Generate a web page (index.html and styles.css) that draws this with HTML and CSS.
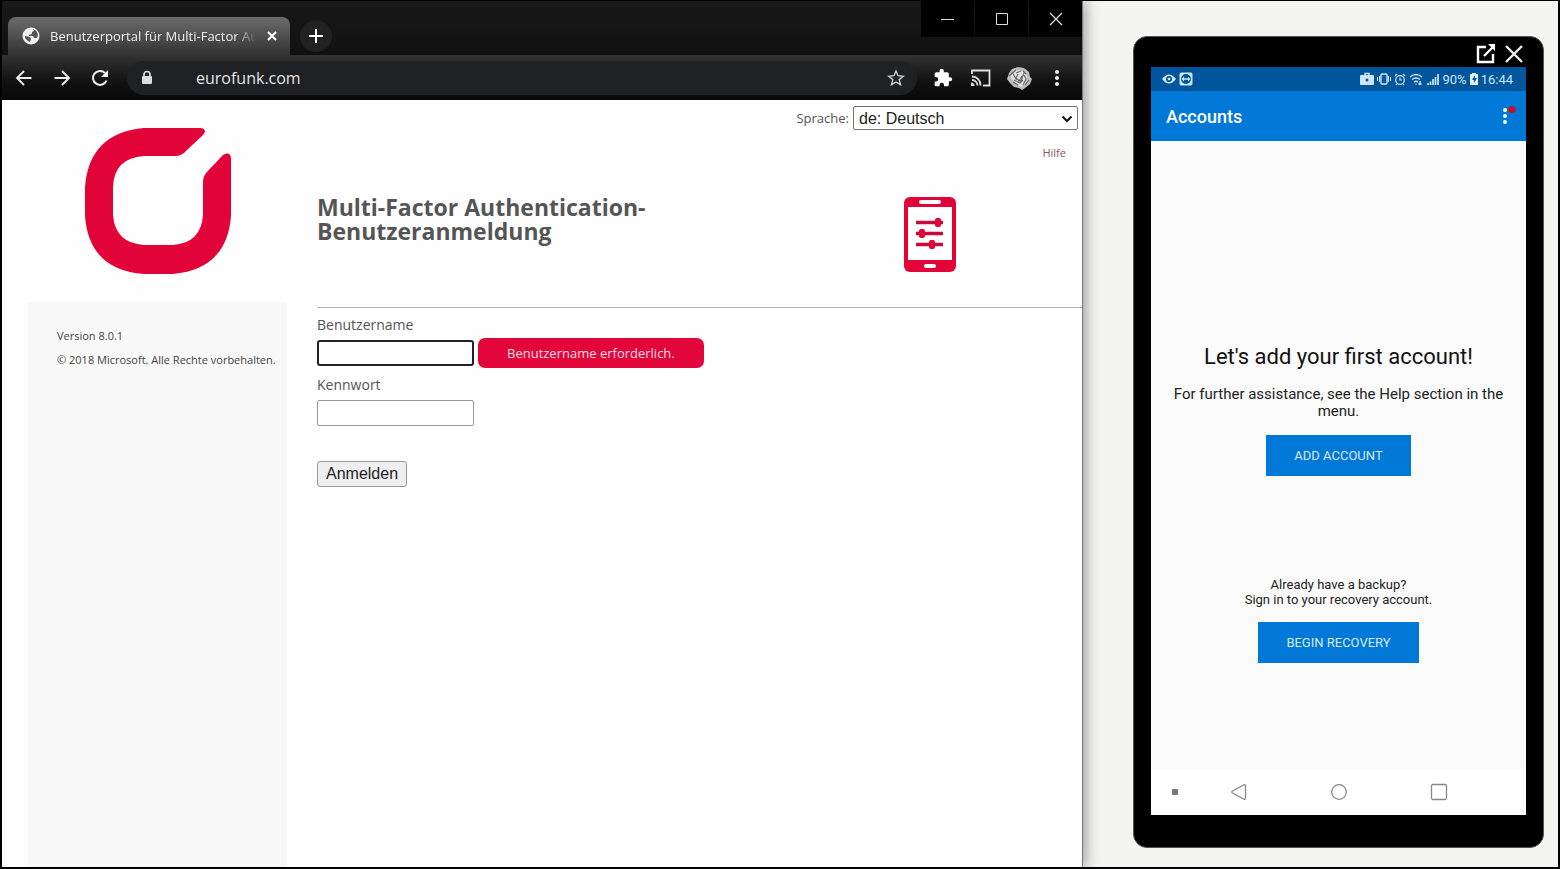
FILE: index.html
```html
<!DOCTYPE html>
<html lang="de">
<head>
    <meta charset="UTF-8">
    <meta name="viewport" content="width=device-width, initial-scale=1.0">
    <title>Benutzerportal für Multi-Factor Authentication</title>
    <link rel="stylesheet" href="styles.css">
</head>
<body>
    <div class="browser">
        <div class="titlebar">
            <div class="tab">
                <svg class="tab-icon" width="18" height="18" viewBox="0 0 18 18">
                    <circle cx="9" cy="9" r="8.500" fill="#f1f1f1"/>
                    <path d="M3 9l5 1 1 2-1 3-2-1-3-3zM9 2l3 0 0 2-2 1 0 2-3 1 0 1 4 0 1 2 3 0 1-3-1-3-2-2-2-1z" fill="#555"/>
                </svg>
                <span class="tab-title">Benutzerportal für Multi-Factor Authentication</span>
                <button class="tab-close" aria-label="Tab schließen">
                    <svg width="12" height="12" viewBox="0 0 12 12"><path d="M2 2l8 8M10 2l-8 8" stroke="#fff" stroke-width="2"/></svg>
                </button>
            </div>
            <button class="new-tab" aria-label="Neuer Tab">
                <svg width="14" height="14" viewBox="0 0 14 14"><path d="M7 0v14M0 7h14" stroke="#fff" stroke-width="2"/></svg>
            </button>
            <div class="window-controls">
                <button aria-label="Minimieren"><svg width="14" height="14" viewBox="0 0 14 14"><path d="M0 7.500h13" stroke="#ddd"/></svg></button>
                <button aria-label="Maximieren"><svg width="14" height="14" viewBox="0 0 14 14"><path d="M1.500 1.500h11v11h-11z" fill="none" stroke="#ddd"/></svg></button>
                <button aria-label="Schließen"><svg width="14" height="14" viewBox="0 0 14 14"><path d="M1 1l12 12M13 1L1 13" stroke="#ddd" stroke-width="1.300"/></svg></button>
            </div>
        </div>

        <div class="toolbar">
            <button class="tool" aria-label="Zurück">
                <svg width="18" height="18" viewBox="0 0 18 18"><path d="M16.500 9H2M9 2L2 9l7 7" fill="none" stroke="#eee" stroke-width="1.800"/></svg>
            </button>
            <button class="tool" aria-label="Vorwärts">
                <svg width="18" height="18" viewBox="0 0 18 18"><path d="M1.500 9H16M9 2l7 7-7 7" fill="none" stroke="#eee" stroke-width="1.800"/></svg>
            </button>
            <button class="tool" aria-label="Neu laden">
                <svg width="18" height="18" viewBox="0 0 18 18"><path d="M15.500 11.500A7 7 0 1 1 14 4" fill="none" stroke="#eee" stroke-width="2"/><path d="M17 1v7h-7z" fill="#eee"/></svg>
            </button>
            <div class="omnibox">
                <svg class="lock" width="12" height="16" viewBox="0 0 12 16"><path d="M3 7V4.500a3 3 0 0 1 6 0V7" fill="none" stroke="#ddd" stroke-width="1.700"/><rect x="1" y="6" width="10" height="8" rx="1" fill="#ddd"/></svg>
                <input class="address" type="text" value="eurofunk.com" aria-label="Adresse">
                <button class="star" aria-label="Lesezeichen">
                    <svg width="18" height="18" viewBox="0 0 18 18"><path d="M9 2l2 4.700 5.200.5-4 3.400 1.300 5.100L9 13l-4.500 2.700 1.300-5.100-4-3.400L7 6.700z" fill="none" stroke="#ccc" stroke-width="1.400"/></svg>
                </button>
            </div>
            <button class="tool" aria-label="Erweiterungen">
                <svg width="20" height="20" viewBox="0 0 24 24"><path d="M20.500 11H19V7a2 2 0 0 0-2-2h-4V3.500a2.500 2.500 0 0 0-5 0V5H4a2 2 0 0 0-2 2v3.800h1.500a2.700 2.700 0 0 1 0 5.400H2V20a2 2 0 0 0 2 2h3.800v-1.500a2.700 2.700 0 0 1 5.400 0V22H17a2 2 0 0 0 2-2v-4h1.500a2.500 2.500 0 0 0 0-5z" fill="#fff"/></svg>
            </button>
            <button class="tool" aria-label="Streamen">
                <svg width="20" height="18" viewBox="0 0 20 18"><path d="M1 5V1.500h17.500v15H12M1 7.500a8.500 8.500 0 0 1 8.500 9M1 11a5.500 5.500 0 0 1 5.500 5.500" fill="none" stroke="#ddd" stroke-width="1.800"/><path d="M0 13.500a3.500 3.500 0 0 1 3.500 3.500H0z" fill="#ddd"/></svg>
            </button>
            <button class="tool" aria-label="Profil">
                <svg width="26" height="24" viewBox="0 0 26 24">
                    <path d="M3 7l3-4 6-2 6 1 5 4 1 5 2 2-2 5-5 4-3 2-3-2-5-1-4-4-3-4z" fill="#bdbdbd"/>
                    <path d="M5 8l5-4 7 1 4 5-2 8-4 3-6-5-4-4z" fill="#e2e2e2"/>
                    <path d="M3 10l7-6M6 6l4 7 5 2 3-8M10 7l5-2M8 14l6 3 3-3M12 8l-2 4 3 3 3-5M18 9l2 4-3 6M7 16l5 3M20 8l-3-3M19 19l4-5" fill="none" stroke="#666" stroke-width="1.100"/>
                </svg>
            </button>
            <button class="tool" aria-label="Menü">
                <svg width="6" height="18" viewBox="0 0 6 18" fill="#eee"><circle cx="3" cy="3" r="2"/><circle cx="3" cy="9" r="2"/><circle cx="3" cy="15" r="2"/></svg>
            </button>
        </div>

        <div class="page">
            <div class="left">
                <svg class="logo" width="146" height="147" viewBox="0 0 146 147">
                    <path d="M59 1H115Q119 1 120 4Q120 6 118 8L102 23Q97 29 90 29H59Q29 31 28 60V88Q30 116 59 118H88Q116 116 118 88V54Q118 50 121 46L138 28Q145 24 146 31V89Q142 142 88 147H59Q4 143 0 89V60Q4 6 59 1Z" fill="#e20338"/>
                </svg>
                <aside class="sidebar">
                    <p>Version 8.0.1</p>
                    <p>© 2018 Microsoft. Alle Rechte vorbehalten.</p>
                </aside>
            </div>

            <main class="main">
                <div class="language">
                    <label for="language">Sprache:</label>
                    <div class="select-wrap">
                        <select id="language">
                            <option>de: Deutsch</option>
                        </select>
                        <svg class="select-arrow" width="12" height="8" viewBox="0 0 12 8"><path d="M1.500 1.500L6 6l4.500-4.500" fill="none" stroke="#111" stroke-width="2"/></svg>
                    </div>
                </div>
                <a class="help" href="#">Hilfe</a>

                <div class="heading">
                    <h1>Multi-Factor Authentication-<br>Benutzeranmeldung</h1>
                    <svg class="device" width="52" height="75" viewBox="0 0 52 75">
                        <rect width="52" height="75" rx="6" fill="#e20338"/>
                        <rect x="4" y="10" width="44" height="53" fill="#fff"/>
                        <rect x="15" y="3" width="22" height="4" rx="2" fill="#fff"/>
                        <rect x="20" y="67" width="12" height="4" rx="2" fill="#fff"/>
                        <path d="M12 25.500h27M12 36.500h27M12 47.500h27" stroke="#c80b3a" stroke-width="3.500"/>
                        <rect x="31" y="21" width="6" height="9" rx="2" fill="#e20338"/>
                        <rect x="15" y="32" width="6" height="9" rx="2" fill="#e20338"/>
                        <rect x="25" y="43" width="6" height="9" rx="2" fill="#e20338"/>
                    </svg>
                </div>

                <form class="login">
                    <label for="username">Benutzername</label>
                    <div class="field">
                        <input class="focused" type="text" id="username" name="username">
                        <span class="error">Benutzername erforderlich.</span>
                    </div>
                    <label for="password">Kennwort</label>
                    <div class="field">
                        <input type="password" id="password" name="password">
                    </div>
                    <button class="submit" type="submit">Anmelden</button>
                </form>
            </main>
        </div>
    </div>

    <div class="desk">
        <div class="phone">
            <div class="phone-top">
                <button aria-label="Open in window">
                    <svg width="20" height="20" viewBox="0 0 20 20"><path d="M10 3H2v15h15v-8M8 12l9-9" fill="none" stroke="#fff" stroke-width="2.400"/><path d="M12 0h7v7z" fill="#fff"/></svg>
                </button>
                <button aria-label="Close">
                    <svg width="20" height="20" viewBox="0 0 20 20"><path d="M2 2l16 16M18 2L2 18" stroke="#eee" stroke-width="2.400"/></svg>
                </button>
            </div>
            <div class="screen" lang="en">
                <div class="status">
                    <svg width="14" height="10" viewBox="0 0 14 10"><path d="M0 5Q7-4 14 5Q7 14 0 5z" fill="#cfe4f7"/><circle cx="7" cy="5" r="3" fill="#00569c"/><circle cx="7" cy="5" r="1.300" fill="#cfe4f7"/></svg>
                    <svg width="14" height="14" viewBox="0 0 14 14"><rect x="0.500" y="0.500" width="13" height="13" rx="2" fill="#cfe4f7"/><circle cx="7" cy="7" r="5" fill="#00569c"/><path d="M2.500 7l2.500-2.500v1.700h4V4.500L11.500 7 9 9.500V7.800H5v1.700z" fill="#cfe4f7"/></svg>
                    <div class="status-right">
                        <svg width="14" height="14" viewBox="0 0 14 14"><path d="M5 4V1.500h4V4" fill="none" stroke="#cfe4f7" stroke-width="1.500"/><rect y="3" width="14" height="10" rx="1" fill="#cfe4f7"/><circle cx="7" cy="8" r="1.500" fill="#00569c"/></svg>
                        <svg width="14" height="12" viewBox="0 0 14 12" fill="none" stroke="#cfe4f7"><rect x="4" y="1" width="6" height="10" rx="1" stroke-width="1.400"/><path d="M2.500 3v6M.5 4v4M11.500 3v6M13.500 4v4"/></svg>
                        <svg width="12" height="13" viewBox="0 0 12 13" fill="none" stroke="#cfe4f7" stroke-width="1.200"><circle cx="6" cy="7" r="4.300"/><path d="M1 3l2-2M11 3L9 1M6 4.500V7h2M3 11l-1 1M9 11l1 1"/></svg>
                        <svg width="15" height="12" viewBox="0 0 15 12" fill="none" stroke="#cfe4f7" stroke-width="1.300"><path d="M1 4q6-5 12 0M3 6.500q4-3 8 0M5 9q2-1.500 4 0"/><path d="M7 10.500v1M11 8v4M9.500 10.500L11 12l1.500-1.500"/></svg>
                        <svg width="12" height="11" viewBox="0 0 12 11"><path d="M1 11V9M3.500 11V7.500M6 11V5M8.500 11V3M11 11V0" stroke="#cfe4f7" stroke-width="1.700"/></svg>
                        <span>90%</span>
                        <svg width="8" height="12" viewBox="0 0 8 12"><path d="M0 1h2V0h4v1h2v11H0z" fill="#e4f0fa"/><path d="M5 2L2 7h2v3l3-5H5z" fill="#00569c"/></svg>
                        <span>16:44</span>
                    </div>
                </div>
                <header class="appbar">
                    <h2>Accounts</h2>
                    <button class="more" aria-label="More options">
                        <svg width="16" height="20" viewBox="0 0 16 20"><g fill="#fff"><circle cx="5" cy="4" r="2"/><circle cx="5" cy="10" r="2"/><circle cx="5" cy="16" r="2"/></g><circle cx="12" cy="3.500" r="3.500" fill="#d0091f"/></svg>
                    </button>
                </header>
                <div class="app">
                    <h3>Let's add your first account!</h3>
                    <p class="assist">For further assistance, see the Help section in the menu.</p>
                    <button class="action">ADD ACCOUNT</button>
                    <p class="backup">Already have a backup?<br>Sign in to your recovery account.</p>
                    <button class="action">BEGIN RECOVERY</button>
                </div>
                <nav class="navbar">
                    <span class="dot"></span>
                    <button aria-label="Back"><svg width="18" height="18" viewBox="0 0 18 18"><path d="M14 1.800Q15.500 1 15.500 3v12Q15.500 17 14 16.200L2.500 10Q1 9 2.500 8z" fill="none" stroke="#888" stroke-width="1.300"/></svg></button>
                    <button aria-label="Home"><svg width="18" height="18" viewBox="0 0 18 18"><circle cx="9" cy="9" r="7.300" fill="none" stroke="#888" stroke-width="1.300"/></svg></button>
                    <button aria-label="Recents"><svg width="18" height="18" viewBox="0 0 18 18"><rect x="1.500" y="1.500" width="15" height="15" rx="1.500" fill="none" stroke="#888" stroke-width="1.300"/></svg></button>
                </nav>
            </div>
        </div>
    </div>
</body>
</html>
```

FILE: styles.css
```css
* {
    box-sizing: border-box;
}
body {
    margin: 0;
    min-height: 100vh;
    display: flex;
    border: 2px solid #000;
    border-top-width: 1px;
    background-color: #f4f4f3;
    font-family: "Open Sans", "Noto Sans", sans-serif;
    font-size: 14px;
    color: #555;
}
h1, h2, h3, p {
    margin: 0;
}
button {
    padding: 0;
    border: none;
    background: none;
    font-family: inherit;
    cursor: pointer;
}
svg {
    display: block;
    flex-shrink: 0;
}

/* Browser window */
.browser {
    flex: 1;
    min-width: 0;
    display: flex;
    flex-direction: column;
    background-color: #fefefe;
    border-right: 1px solid #777;
    box-shadow: 2px 0 14px rgba(0, 0, 0, 0.4);
}
.titlebar {
    display: flex;
    height: 54px;
    padding-left: 6px;
    background: linear-gradient(#191919, #111);
}
.tab {
    display: flex;
    align-items: center;
    width: 282px;
    height: 38px;
    margin-top: 16px;
    padding: 0 12px 0 14px;
    border-radius: 8px 8px 0 0;
    background: linear-gradient(#6c6c6c, #333);
}
.tab-title {
    flex: 1;
    margin: 0 10px;
    overflow: hidden;
    white-space: nowrap;
    font-size: 13px;
    color: #eee;
    -webkit-mask-image: linear-gradient(to right, #000 90%, transparent);
    mask-image: linear-gradient(to right, #000 90%, transparent);
}
.new-tab {
    display: flex;
    align-items: center;
    justify-content: center;
    width: 32px;
    height: 32px;
    margin: 19px 0 0 10px;
    border-radius: 50%;
    background-color: #222;
}
.window-controls {
    display: flex;
    gap: 1px;
    height: 36px;
    margin-left: auto;
}
.window-controls button {
    display: flex;
    align-items: center;
    justify-content: center;
    width: 53px;
    background-color: #000;
}
.toolbar {
    display: flex;
    align-items: center;
    height: 45px;
    padding: 0 6px 0 3px;
    background: linear-gradient(#333, #111 60%, #090909);
}
.tool {
    display: flex;
    align-items: center;
    justify-content: center;
    width: 38px;
    height: 38px;
}
.omnibox {
    flex: 1;
    display: flex;
    align-items: center;
    height: 34px;
    margin: 0 7px 0 8px;
    padding: 0 12px 0 14px;
    border-radius: 17px;
    background-color: #202124;
}
.address {
    flex: 1;
    min-width: 0;
    margin-left: 43px;
    padding: 0;
    border: none;
    outline: none;
    background: none;
    font-family: inherit;
    font-size: 16px;
    color: #e4e4e4;
}

/* Login page */
.page {
    flex: 1;
    display: flex;
    gap: 30px;
    padding-left: 26px;
}
.left {
    display: flex;
    flex-direction: column;
    width: 259px;
}
.logo {
    margin: 27px 0 28px 57px;
}
.sidebar {
    flex: 1;
    padding: 22px 0 0 29px;
    background-color: #f8f8f8;
    font-size: 11px;
    line-height: 24px;
    white-space: nowrap;
    color: #444;
}
.main {
    flex: 1;
    display: flex;
    flex-direction: column;
}
.language {
    display: flex;
    align-items: center;
    justify-content: flex-end;
    gap: 4px;
    padding: 6px 4px 0 0;
    font-size: 13px;
}
.select-wrap {
    position: relative;
}
.select-wrap select {
    width: 225px;
    height: 24px;
    padding: 0 5px;
    appearance: none;
    border: 1px solid #767676;
    border-radius: 2px;
    background-color: #fff;
    font-family: "Liberation Sans", Arial, sans-serif;
    font-size: 16px;
    color: #222;
}
.select-arrow {
    position: absolute;
    top: 9px;
    right: 5px;
    pointer-events: none;
}
.help {
    align-self: flex-end;
    margin: 15px 16px 0 0;
    font-size: 11px;
    line-height: 16px;
    color: #8a5a5e;
    text-decoration: none;
}
.heading {
    display: flex;
    align-items: flex-start;
    justify-content: space-between;
    height: 147px;
    padding: 34px 126px 0 0;
    border-bottom: 1px solid #b5b5b5;
}
h1 {
    font-size: 23px;
    line-height: 24px;
    color: #555;
}
.device {
    margin-top: 2px;
}
.login {
    display: flex;
    flex-direction: column;
    align-items: flex-start;
    padding-top: 7px;
}
.login label {
    line-height: 20px;
}
.field {
    display: flex;
    align-items: center;
    gap: 4px;
    height: 30px;
    margin: 3px 0 7px;
}
.field input {
    width: 157px;
    height: 26px;
    border: 1px solid #999;
    border-radius: 2px;
    background-color: #fff;
    font-size: 16px;
}
.field .focused {
    border: 2px solid #222;
    border-radius: 3px;
}
.error {
    padding: 0 29px;
    border-radius: 7px;
    background-color: #e2063b;
    font-size: 13px;
    line-height: 30px;
    color: #fbdde4;
}
.submit {
    height: 26px;
    margin-top: 26px;
    padding: 0 8px;
    border: 1px solid #999;
    border-radius: 3px;
    background-color: #efefef;
    font-family: "Liberation Sans", Arial, sans-serif;
    font-size: 16px;
    color: #222;
}

/* Phone */
.desk {
    display: flex;
    padding: 35px 14px 19px 50px;
}
.phone {
    display: flex;
    flex-direction: column;
    width: 411px;
    padding: 0 17px 32px;
    border: 1px solid #555;
    border-radius: 14px;
    background-color: #000;
    font-family: Roboto, sans-serif;
    color: #222;
}
.phone-top {
    display: flex;
    align-items: center;
    justify-content: flex-end;
    gap: 8px;
    height: 30px;
    padding: 4px 2px 0 0;
}
.screen {
    flex: 1;
    display: flex;
    flex-direction: column;
    background-color: #fafafa;
}
.status {
    display: flex;
    align-items: center;
    gap: 3px;
    height: 24px;
    padding: 0 13px 0 11px;
    background-color: #00569c;
    font-size: 13px;
    color: #cfe4f7;
}
.status-right {
    display: flex;
    align-items: center;
    gap: 3px;
    margin-left: auto;
}
.appbar {
    display: flex;
    align-items: center;
    justify-content: space-between;
    height: 50px;
    padding: 0 10px 0 15px;
    background-color: #0078d7;
    color: #fff;
}
.appbar h2 {
    font-size: 18px;
    font-weight: 500;
}
.app {
    flex: 1;
    display: flex;
    flex-direction: column;
    align-items: center;
    padding: 202px 20px 0;
    text-align: center;
}
.app h3 {
    font-size: 22px;
    font-weight: 400;
    line-height: 28px;
    color: #111;
}
.assist {
    margin: 15px 0;
    font-size: 15px;
    line-height: 17px;
}
.action {
    height: 41px;
    padding: 0 28px;
    background-color: #0078d7;
    font-size: 13px;
    color: #d9ebfa;
}
.backup {
    margin: 101px 0 15px;
    font-size: 13px;
    line-height: 15px;
}
.navbar {
    display: flex;
    align-items: center;
    gap: 82px;
    height: 46px;
    padding-left: 21px;
    background-color: #fff;
}
.navbar button {
    display: flex;
}
.dot {
    flex-shrink: 0;
    width: 6px;
    height: 6px;
    margin-right: -30px;
    border-radius: 1px;
    background-color: #777;
}
```
